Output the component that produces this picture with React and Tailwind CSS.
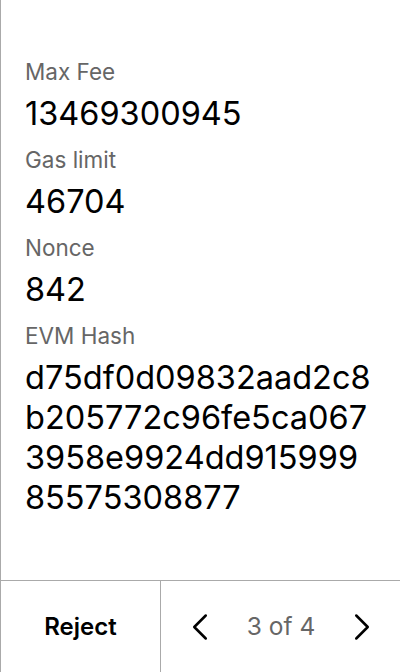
import {ChevronLeft, ChevronRight} from "lucide-react";

const fields = [
    {label: "Max Fee", value: ["13469300945"]},
    {label: "Gas limit", value: ["46704"]},
    {label: "Nonce", value: ["842"]},
    {label: "EVM Hash", value: ["d75df0d09832aad2c8", "b205772c96fe5ca067", "3958e9924dd915999", "85575308877"]},
];

const App = () => {
    return (
        <div className="h-[672px] w-[400px] flex flex-col border-l border-[#aaaaaa] bg-white font-['Inter',sans-serif]">
            <div className="flex-1 px-6 pt-[58px]">
                {fields.map((f) => (
                    <div key={f.label} className="mb-[12px]">
                        <div className="text-[22.5px] leading-[28px] text-[#666666] mb-[8px]">{f.label}</div>
                        {f.value.map((line) => (
                            <div key={line} className="text-[32.5px] leading-[40px] text-black whitespace-nowrap">{line}</div>
                        ))}
                    </div>
                ))}
            </div>
            <div className="h-[92px] flex border-t border-[#aaaaaa]">
                <button className="w-[160px] flex items-center justify-center text-[24px] font-semibold text-black border-r border-[#aaaaaa]">
                    Reject
                </button>
                <div className="flex-1 flex items-center justify-between pl-[16px] pr-[15px]">
                    <ChevronLeft size={46} strokeWidth={1.3} className="text-black"/>
                    <span className="text-[24.5px] text-[#666666]">3 of 4</span>
                    <ChevronRight size={46} strokeWidth={1.3} className="text-black"/>
                </div>
            </div>
        </div>
    );
};

export default App;
